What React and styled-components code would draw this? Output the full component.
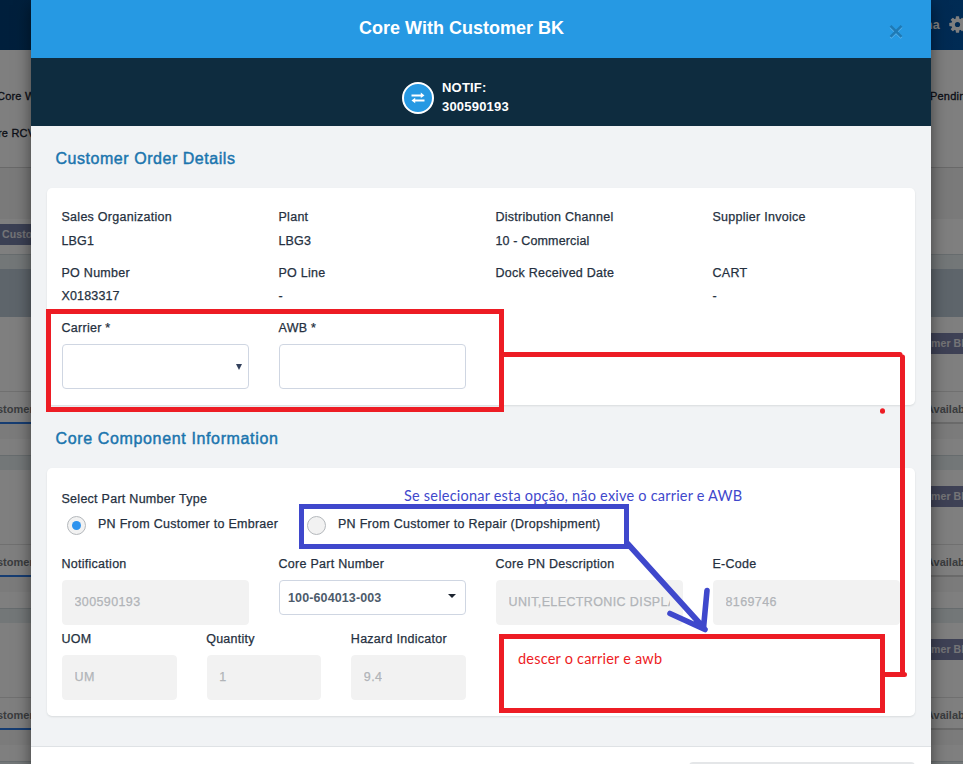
import React from "react";
import styled, { createGlobalStyle } from "styled-components";

const Global = createGlobalStyle`
  * { box-sizing: border-box; }
  html, body { margin: 0; height: 764px; overflow: hidden; background: #fff; }
  body { font-family: "Liberation Sans", Arial, sans-serif; }
`;

const Screen = styled.div`
  position: relative;
  width: 963px;
  height: 764px;
  overflow: hidden;
`;

/* ---- page behind the dialog ---- */
const Page = styled.div`
  display: flex;
  flex-direction: column;
`;
const Split = styled.div`
  display: grid;
  grid-template-columns: 31px 32px;
  justify-content: space-between;
  align-items: center;
  white-space: nowrap;
`;
const TopBar = styled(Split)`
  height: 50px;
  background: linear-gradient(90deg, #003f78, #0056a8);
  color: #fff;
  font-size: 12.5px;
  font-weight: bold;
`;
const UserArea = styled.div`
  display: flex;
  align-items: center;
  gap: 9px;
  margin-left: -6px;
  padding-bottom: 1px;
  svg { flex: none; }
`;
const TabsArea = styled.div`
  height: 118px;
  padding-top: 27px;
  border-bottom: 1px solid #d2d2d2;
`;
const TabLine = styled(Split)`
  height: 37px;
  font-size: 11px;
  letter-spacing: 0.2px;
  color: #16202e;
  -webkit-text-stroke: 0.3px #16202e;
`;
const Fragment = styled.span`
  margin-left: ${(p) => p.$shift || 0}px;
`;
const Band = styled.div`
  height: ${(p) => p.$h}px;
  background: ${(p) => p.$bg};
  border-top: ${(p) => (p.$line ? `1px solid ${p.$line}` : "none")};
`;
const ActionRow = styled(Split)`
  height: 35px;
  align-items: start;
  padding-top: 5px;
`;
const Tag = styled.div`
  height: 21px;
  line-height: 21px;
  background: ${(p) => p.$bg || "#7c82aa"};
  color: #e8e8ee;
  font-size: 10.5px;
  font-weight: bold;
  letter-spacing: 0.1px;
  padding-left: ${(p) => p.$pad || 0}px;
`;
const Entry = styled.div`
  height: 138px;
`;
const EntryHead = styled(Split)`
  height: 74px;
  padding-top: 16px;
  align-items: start;
`;
const EntryTabs = styled(Split)`
  height: 33px;
  border-top: 1px solid #e0e0e0;
  font-size: 11px;
  font-weight: bold;
  color: #74787c;
`;
const EntryTab = styled.div`
  height: 32px;
  line-height: 35px;
  border-bottom: 2px solid ${(p) => (p.$active ? "#2c7be5" : "#d5d5d5")};
  text-indent: ${(p) => (p.$active ? -3 : -5)}px;
`;
const Dim = styled.div`
  position: absolute;
  inset: 0;
  background: rgba(0, 0, 0, 0.5);
`;

/* ---- dialog ---- */
const Dialog = styled.section`
  position: absolute;
  top: 0;
  left: 31px;
  width: 900px;
  height: 800px;
  display: flex;
  flex-direction: column;
  background: #fff;
  box-shadow: 0 5px 15px rgba(0, 0, 0, 0.5);
  > * { flex: none; }
`;
const DialogHeader = styled.header`
  display: grid;
  grid-template-columns: 20px 1fr 60px;
  align-items: center;
  height: 58px;
  background: #2699e3;
`;
const DialogTitle = styled.h1`
  grid-column: 2;
  margin: 0;
  padding: 0 0 2px 1px;
  text-align: center;
  font-size: 18px;
  line-height: 22px;
  color: #fff;
`;
const CloseButton = styled.button`
  display: flex;
  justify-content: center;
  margin: 5px 0 0 -10px;
  padding: 0;
  border: 0;
  background: none;
`;
const NotifBar = styled.div`
  display: flex;
  align-items: center;
  gap: 8px;
  height: 68px;
  padding: 10px 0 0 371px;
  background: #0e2c3f;
  color: #fff;
`;
const NotifBadge = styled.div`
  display: flex;
  align-items: center;
  justify-content: center;
  width: 32px;
  height: 32px;
  margin-top: 2px;
  border: 2px solid #fff;
  border-radius: 50%;
  background: #2699e3;
`;
const NotifText = styled.div`
  font-size: 13px;
  line-height: 19px;
  font-weight: bold;
  letter-spacing: 0.2px;
`;
const DialogBody = styled.div`
  height: 621px;
  padding: 0 16px;
  background: #f1f3f5;
  border-bottom: 1px solid #dfe2e5;
`;
const SectionTitle = styled.h2`
  margin: 0;
  height: ${(p) => p.$h}px;
  padding: ${(p) => p.$top}px 0 0 8.5px;
  font-size: 16px;
  line-height: 20px;
  font-weight: normal;
  letter-spacing: ${(p) => p.$track}px;
  color: #1b75ae;
  -webkit-text-stroke: 0.45px #1b75ae;
`;
const Card = styled.div`
  height: ${(p) => p.$h}px;
  padding-top: ${(p) => p.$top}px;
  border-radius: 5px;
  background: #fff;
  box-shadow: 0 1px 2px rgba(40, 50, 60, 0.12);
`;
const Row = styled.div`
  display: grid;
  grid-template-columns: repeat(${(p) => p.$cols || 4}, 1fr);
  height: ${(p) => p.$h}px;
`;
const Field = styled.div`
  display: flex;
  flex-direction: column;
  gap: ${(p) => (p.$gap == null ? 8 : p.$gap)}px;
  min-width: 0;
  padding: 0 15px;
`;
const Label = styled.span`
  display: block;
  height: 16px;
  margin-left: -0.5px;
  line-height: 16px;
  font-size: 12.5px;
  letter-spacing: 0.27px;
  white-space: nowrap;
  color: #253040;
  -webkit-text-stroke: 0.25px #253040;
`;
const Value = styled(Label)`
  letter-spacing: 0.15px;
`;
const Box = styled.div`
  display: flex;
  flex: none;
  align-items: center;
  justify-content: space-between;
  height: 45px;
  padding: 0 6px 0 12px;
  border: 1px solid #cfd6e2;
  border-radius: 4px;
  background: #fff;
`;
const Combo = styled(Box)`
  height: 35px;
  padding: 0 9px 0 8px;
  font-size: 12.5px;
  font-weight: bold;
  letter-spacing: 0.12px;
  color: #4d5b6b;
  svg { margin-bottom: 4px; }
`;
const Disabled = styled(Box)`
  border-color: #f2f2f2;
  background: #f2f2f2;
  padding: 0 12px 2px 11.5px;
  font-size: 12.5px;
  letter-spacing: 0.38px;
  color: #b1b4b8;
  -webkit-text-stroke: 0.25px #b1b4b8;
  span { overflow: hidden; white-space: nowrap; }
`;
const RadioGroup = styled.div`
  display: grid;
  grid-template-columns: 240px 1fr;
  height: 49px;
  padding: 8px 0 0 20px;
`;
const RadioItem = styled.div`
  display: flex;
  align-items: flex-start;
  gap: 12px;
  ${Label} { margin: 1px 0 0; }
`;
const RadioMark = styled.span`
  display: flex;
  align-items: center;
  justify-content: center;
  width: 19px;
  height: 19px;
  margin-top: 1px;
  border: 1px solid #b4b8bc;
  border-radius: 50%;
  background: #f2f2f2;
  &::after {
    content: "";
    width: 9px;
    height: 9px;
    border-radius: 50%;
    background: ${(p) => (p.$on ? "#2e93ee" : "transparent")};
  }
`;
const DialogFooter = styled.footer`
  display: flex;
  justify-content: flex-end;
  padding: 15px 16px;
`;
const FooterButton = styled.div`
  width: 226px;
  height: 34px;
  border: 2px solid #e4e6e8;
  border-radius: 4px;
`;

/* ---- hand-drawn markup over the dialog ---- */
const Markup = styled.svg`
  position: absolute;
  inset: 0;
`;
const Note = styled.p`
  position: absolute;
  left: ${(p) => p.$x}px;
  top: ${(p) => p.$y}px;
  margin: 0;
  font: 14.5px/20px Lato, sans-serif;
  letter-spacing: 0.21px;
  white-space: nowrap;
  color: ${(p) => p.$color};
`;

const RED = "#ed1c24";
const BLUE = "#3f48cc";

const Gear = () => (
  <svg width="17" height="17" viewBox="-8.5 -8.5 17 17">
    {[0, 45, 90, 135].map((angle) => (
      <rect key={angle} x="-1.7" y="-8.2" width="3.4" height="16.4" rx="0.6" fill="#fff" transform={`rotate(${angle})`} mask="url(#hub)" />
    ))}
    <circle r="4.4" fill="none" stroke="#fff" strokeWidth="3.6" />
    <circle r="2.6" fill="#0055a6" />
  </svg>
);

const Info = ({ label, value, gap }) => (
  <Field $gap={gap}>
    <Label>{label}</Label>
    {value && <Value>{value}</Value>}
  </Field>
);

const ReadOnly = ({ label, value }) => (
  <Field>
    <Label>{label}</Label>
    <Disabled><span>{value}</span></Disabled>
  </Field>
);

const Radio = ({ on, children }) => (
  <RadioItem>
    <RadioMark $on={on} />
    <Label>{children}</Label>
  </RadioItem>
);

const OrderEntry = () => (
  <>
    <Entry>
      <EntryHead><span /><Tag>mer BK</Tag></EntryHead>
      <EntryTabs>
        <EntryTab $active>stomer</EntryTab>
        <EntryTab>Availab</EntryTab>
      </EntryTabs>
      <Band $h={15} $bg="#f7f7f7" />
    </Entry>
    <Band $h={15} $bg="#e6eef1" $line="#cfd8dd" />
  </>
);

export default function App() {
  return (
    <Screen>
      <Global />
      <Page>
        <TopBar>
          <span />
          <UserArea><span>na</span><Gear /></UserArea>
        </TopBar>
        <TabsArea>
          <TabLine><Fragment $shift={-3}>Core W</Fragment><Fragment $shift={-1}>Pendin</Fragment></TabLine>
          <TabLine><Fragment $shift={-2}>re RCV</Fragment><span /></TabLine>
        </TabsArea>
        <Band $h={51} $bg="#f5f5f5" />
        <ActionRow><Tag $bg="#7780a8" $pad={2}>Custo</Tag></ActionRow>
        <Band $h={15} $bg="#e6eef1" $line="#cfd8dd" />
        <Band $h={48} $bg="#bccad6" />
        <OrderEntry />
        <OrderEntry />
        <OrderEntry />
      </Page>
      <Dim />

      <Dialog>
        <DialogHeader>
          <DialogTitle>Core With Customer BK</DialogTitle>
          <CloseButton aria-label="Close">
            <svg width="14" height="15" viewBox="0 0 14 15">
              <path d="M1.5 2.8 12.5 13.8M12.5 2.8 1.5 13.8" stroke="#5fb5ec" strokeWidth="2.4" />
              <path d="M1.5 1.8 12.5 12.8M12.5 1.8 1.5 12.8" stroke="#1f7ab5" strokeWidth="2.6" />
            </svg>
          </CloseButton>
        </DialogHeader>
        <NotifBar>
          <NotifBadge>
            <svg width="14" height="12" viewBox="0 0 14 12" fill="#fff">
              <path d="M0.5 2.4H9.8V0.6L13.5 3.5 9.8 6.1V4.4H0.5ZM13.5 7.4H4.2V5.7L0.5 8.5 4.2 11.3V9.4H13.5Z" />
            </svg>
          </NotifBadge>
          <NotifText>NOTIF:<br />300590193</NotifText>
        </NotifBar>
        <DialogBody>
          <SectionTitle $h={62} $top={23} $track={0.54}>Customer Order Details</SectionTitle>
          <Card $h={217} $top={21}>
            <Row $h={56}>
              <Info label="Sales Organization" value="LBG1" />
              <Info label="Plant" value="LBG3" />
              <Info label="Distribution Channel" value="10 - Commercial" />
              <Info label="Supplier Invoice" />
            </Row>
            <Row $h={55}>
              <Info gap={7} label="PO Number" value="X0183317" />
              <Info gap={7} label="PO Line" value="-" />
              <Info gap={7} label="Dock Received Date" />
              <Info gap={7} label="CART" value="-" />
            </Row>
            <Row $h={69}>
              <Field>
                <Label>Carrier *</Label>
                <Box>
                  <span />
                  <svg width="6" height="6" viewBox="0 0 6 6"><path d="M0 0H6L3 6Z" fill="#33415c" /></svg>
                </Box>
              </Field>
              <Field>
                <Label>AWB *</Label>
                <Box />
              </Field>
            </Row>
          </Card>
          <SectionTitle $h={63} $top={24} $track={0.64}>Core Component Information</SectionTitle>
          <Card $h={248} $top={23}>
            <Field><Label>Select Part Number Type</Label></Field>
            <RadioGroup>
              <Radio on>PN From Customer to Embraer</Radio>
              <Radio>PN From Customer to Repair (Dropshipment)</Radio>
            </RadioGroup>
            <Row $h={75}>
              <ReadOnly label="Notification" value="300590193" />
              <Field>
                <Label>Core Part Number</Label>
                <Combo>
                  100-604013-003
                  <svg width="8" height="4" viewBox="0 0 8 4"><path d="M0 0H8L4 4Z" fill="#1c2430" /></svg>
                </Combo>
              </Field>
              <ReadOnly label="Core PN Description" value="UNIT,ELECTRONIC DISPLAY" />
              <ReadOnly label="E-Code" value="8169746" />
            </Row>
            <Row $h={69} $cols={6}>
              <ReadOnly label="UOM" value="UM" />
              <ReadOnly label="Quantity" value="1" />
              <ReadOnly label="Hazard Indicator" value="9.4" />
            </Row>
          </Card>
        </DialogBody>
        <DialogFooter><FooterButton /></DialogFooter>
      </Dialog>

      <Markup width="963" height="764" fill="none" strokeWidth="5">
        <g stroke={RED}>
          <rect x="48.5" y="311.5" width="453" height="98" />
          <rect x="501.5" y="636.5" width="381" height="74" />
          <path d="M504 354.5H900M902.5 357V674.5M885 674.5H904.5" strokeLinecap="round" />
          <path d="M882.5 410.7V411.3" strokeLinecap="round" />
        </g>
        <g stroke={BLUE}>
          <rect x="301.5" y="506.5" width="325" height="40" />
          <path d="M627.5 543.5 704 628M707 590.5 703.5 628M670 613.5 705 629.5" strokeWidth="5.6" strokeLinecap="round" />
        </g>
      </Markup>
      <Note $x={404} $y={486} $color={BLUE}>Se selecionar esta opção, não exive o carrier e AWB</Note>
      <Note $x={518} $y={649} $color={RED}>descer o carrier e awb</Note>
    </Screen>
  );
}
